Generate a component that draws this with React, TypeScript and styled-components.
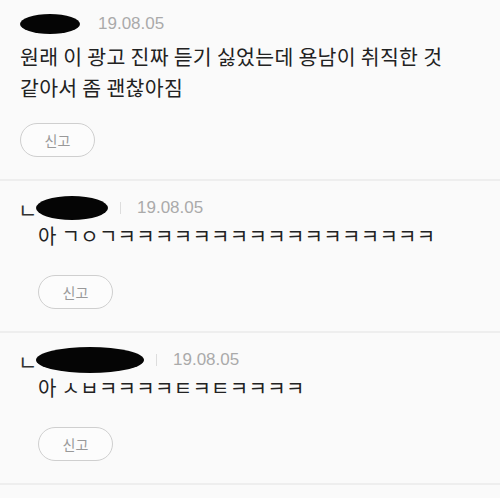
import React from "react";
import styled, { createGlobalStyle } from "styled-components";

const GlobalStyle = createGlobalStyle`
  html, body {
    margin: 0;
    padding: 0;
    background: #fafafa;
  }
  body {
    font-family: "Noto Sans CJK KR", "Noto Sans", sans-serif;
    color: #222;
  }
`;

const Thread = styled.div`
  width: 500px;
  display: flex;
  flex-direction: column;
`;

const StyledComment = styled.div<{ $reply?: boolean }>`
  padding: ${(p) => (p.$reply ? "15px 20px 22px 20px" : "12px 20px 22px 20px")};
  border-bottom: 2px solid #eeeeee;
`;

const Header = styled.div`
  height: 24px;
  display: flex;
  align-items: center;
`;

const ReplyMark = styled.span`
  width: 16px;
  margin-left: -2px;
  margin-right: 2px;
  font-size: 21px;
  line-height: 1;
  color: #333;
  margin-top: 2px;
`;

const Redacted = styled.span<{ $w: number; $h: number }>`
  display: inline-block;
  width: ${(p) => p.$w}px;
  height: ${(p) => p.$h}px;
  background: #050505;
  border-radius: 50% / 50%;
`;

const Separator = styled.span`
  width: 1px;
  height: 12px;
  background: #dddddd;
  margin: 0 16px 0 12px;
`;

const DateText = styled.span<{ $gap?: number }>`
  font-family: "Liberation Sans", Arial, sans-serif;
  font-size: 17px;
  color: #aaaaaa;
  margin-left: ${(p) => p.$gap ?? 0}px;
`;

const Body = styled.div<{ $reply?: boolean }>`
  font-size: ${(p) => (p.$reply ? "20px" : "20.5px")};
  line-height: ${(p) => (p.$reply ? "26px" : "30.5px")};
  margin: ${(p) => (p.$reply ? "3px 0 0 18px" : "5px 0 0 0")};
  color: #222;
  letter-spacing: 0.3px;
  white-space: nowrap;
`;

const ReportButton = styled.button<{ $reply?: boolean }>`
  display: flex;
  align-items: center;
  justify-content: center;
  width: 75px;
  height: 34px;
  margin: ${(p) => (p.$reply ? "26px 0 0 18px" : "21px 0 0 0")};
  padding: 0;
  border: 1px solid #cfcfcf;
  border-radius: 17px;
  background: #fcfcfc;
  font-family: "Noto Sans CJK KR", sans-serif;
  font-size: 14px;
  color: #999999;
`;

type CommentProps = {
  reply?: boolean;
  blob: [number, number];
  text: React.ReactNode;
};

const Comment = ({ reply, blob, text }: CommentProps) => (
  <StyledComment $reply={reply}>
    <Header>
      {reply && <ReplyMark>ㄴ</ReplyMark>}
      <Redacted $w={blob[0]} $h={blob[1]} />
      {reply ? <Separator /> : null}
      <DateText $gap={reply ? 0 : 18}>19.08.05</DateText>
    </Header>
    <Body $reply={reply}>{text}</Body>
    <ReportButton $reply={reply}>신고</ReportButton>
  </StyledComment>
);

const App = () => {
  return (
    <>
      <GlobalStyle />
      <Thread>
        <Comment
          blob={[60, 20]}
          text={
            <>
              원래 이 광고 진짜 듣기 싫었는데 용남이 취직한 것
              <br />
              같아서 좀 괜찮아짐
            </>
          }
        />
        <Comment
          reply
          blob={[72, 24]}
          text="아 ㄱㅇㄱㅋㅋㅋㅋㅋㅋㅋㅋㅋㅋㅋㅋㅋㅋㅋㅋㅋ"
        />
        <Comment reply blob={[108, 26]} text="아 ㅅㅂㅋㅋㅋㅋㅌㅋㅌㅋㅋㅋㅋ" />
      </Thread>
    </>
  );
};

export default App;
